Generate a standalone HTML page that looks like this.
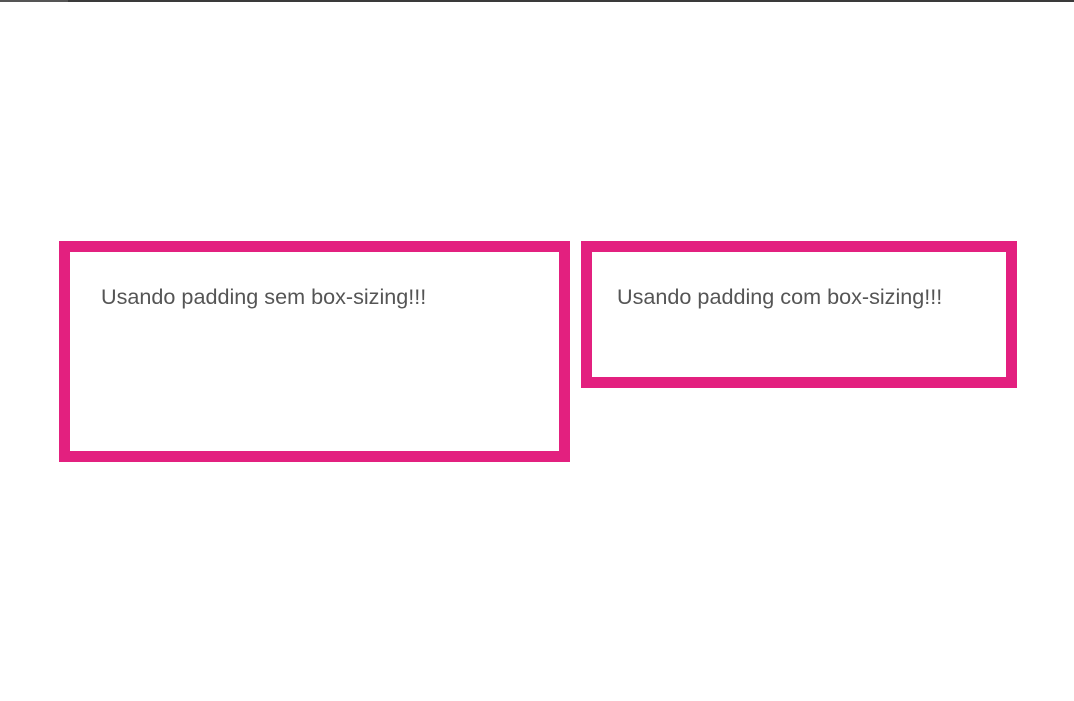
<!DOCTYPE html>
<html><head><style>
body{margin:0;width:1074px;height:701px;background:#fff;position:relative;overflow:hidden;font-family:"Liberation Sans",sans-serif;}
.bar{position:absolute;top:0;left:0;width:1074px;height:2px;background:#3a3a3a}
.bar2{position:absolute;top:0;left:0;width:68px;height:2px;background:#555}
.b{position:absolute;border:11px solid #e3207f;box-sizing:border-box;color:#555;font-size:21.6px}
.b span{position:absolute;top:32px;white-space:nowrap}
</style></head><body>
<div class="bar"></div><div class="bar2"></div>
<div class="b" style="left:59px;top:241px;width:511px;height:221px"><span style="left:31px">Usando padding sem box-sizing!!!</span></div>
<div class="b" style="left:581px;top:241px;width:436px;height:147px"><span style="left:25px">Usando padding com box-sizing!!!</span></div>
</body></html>
